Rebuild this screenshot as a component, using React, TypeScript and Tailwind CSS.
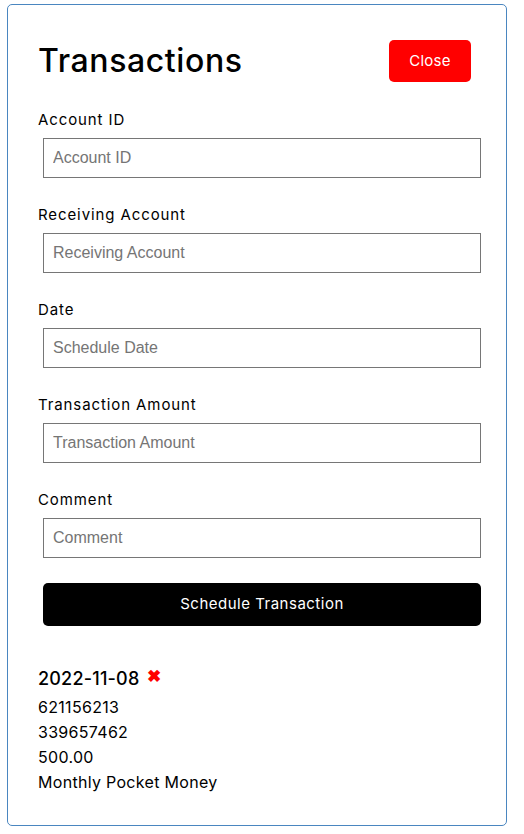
import React from "react";

const FIELDS = [
  { label: "Account ID", placeholder: "Account ID" },
  { label: "Receiving Account", placeholder: "Receiving Account" },
  { label: "Date", placeholder: "Schedule Date" },
  { label: "Transaction Amount", placeholder: "Transaction Amount" },
  { label: "Comment", placeholder: "Comment" },
];

export default function App() {
  return (
    <div className="min-h-[834px] bg-white pt-[4px] pl-[7px] font-['Inter',sans-serif] text-black">
      <div className="w-[500px] h-[822px] rounded-[5px] border border-[#4a86c0] pl-[30px] pr-[25px] pt-[35px]">
        {/* Header */}
        <div className="flex items-center justify-between">
          <h1 className="text-[32px] font-medium leading-none tracking-[0.6px]">Transactions</h1>
          <button className="mr-[10px] h-[42px] w-[82px] rounded-[5px] bg-[#ff0000] text-[15px] tracking-[0.3px] text-white">
            Close
          </button>
        </div>

        {/* Form */}
        <div className="mt-[27px] flex flex-col gap-[26px]">
          {FIELDS.map((f) => (
            <div key={f.label} className="flex flex-col">
              <label className="h-[22px] text-[15px] leading-[22px] tracking-[0.9px]">{f.label}</label>
              <input
                placeholder={f.placeholder}
                className="ml-[5px] mt-[7px] h-[40px] border border-[#767676] px-[9px] font-['Liberation_Sans',Arial,sans-serif] text-[16px] placeholder:text-[#757575] outline-none"
              />
            </div>
          ))}
        </div>

        <button className="ml-[5px] mt-[25px] h-[43px] w-[438px] rounded-[5px] bg-black text-[15px] tracking-[0.5px] text-white">
          Schedule Transaction
        </button>

        {/* Scheduled list */}
        <div className="mt-[40px]">
          <div className="flex items-center gap-[8px]">
            <span className="text-[18px] font-medium leading-[26px] tracking-[0.2px]">2022-11-08</span>
            <span className="-mt-[6px] text-[17px] font-bold leading-none text-[#ff0000]">✖</span>
          </div>
          <div className="mt-[3px] text-[16px] leading-[25px] tracking-[0.3px]">
            <div>621156213</div>
            <div>339657462</div>
            <div>500.00</div>
            <div>Monthly Pocket Money</div>
          </div>
        </div>
      </div>
    </div>
  );
}
